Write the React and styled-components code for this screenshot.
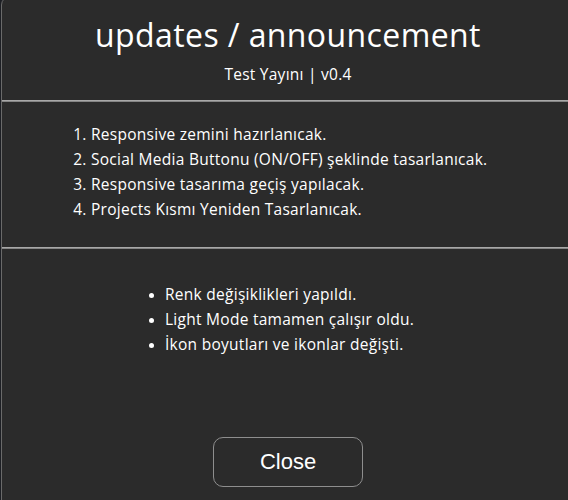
import React from "react";
import styled, { createGlobalStyle } from "styled-components";

const GlobalStyle = createGlobalStyle`
  html, body {
    margin: 0;
    padding: 0;
    background: #1d1f24;
    overflow: hidden;
  }
  body {
    font-family: "Open Sans", "DejaVu Sans", sans-serif;
  }
`;

const Dialog = styled.div`
  box-sizing: border-box;
  width: 574px;
  min-height: 520px;
  margin: -4px 0 0 1px;
  background: #2b2b2b;
  border: 1px solid #6a6a6a;
  border-radius: 9px;
  color: #ffffff;
  display: flex;
  flex-direction: column;
`;

const Header = styled.header`
  padding: 18px 0 16px;
  text-align: center;
`;

const Title = styled.h1`
  margin: 0;
  font-size: 32px;
  line-height: 40px;
  font-weight: 400;
  letter-spacing: 0.4px;
`;

const Subtitle = styled.p`
  margin: 9px 0 0;
  font-size: 15.5px;
  line-height: 20px;
  font-weight: 500;
  letter-spacing: 0.25px;
`;

const Divider = styled.hr`
  margin: 0;
  height: 0;
  border: none;
  border-top: 1px solid #a8a8a8;
  border-bottom: 1px solid #858585;
`;

const Section = styled.section`
  padding: ${(p) => p.$pad};
`;

const List = styled.ol`
  margin: 0;
  padding-left: ${(p) => p.$indent}px;
  list-style: ${(p) => (p.$bullet ? "disc" : "decimal")};
  font-size: 15.5px;
  line-height: 25px;
  font-weight: 500;
  letter-spacing: 0.27px;

  li::marker {
    font-size: ${(p) => (p.$bullet ? "13px" : "15.5px")};
  }
`;

const Footer = styled.footer`
  display: flex;
  justify-content: center;
  padding-top: 80px;
`;

const CloseButton = styled.button`
  width: 150px;
  height: 50px;
  background: transparent;
  border: 1px solid #8e8e8e;
  border-radius: 10px;
  color: #ffffff;
  font-family: "Liberation Sans", Arial, sans-serif;
  font-size: 22px;
  cursor: pointer;
`;

const plans = [
  "Responsive zemini hazırlanıcak.",
  "Social Media Buttonu (ON/OFF) şeklinde tasarlanıcak.",
  "Responsive tasarıma geçiş yapılacak.",
  "Projects Kısmı Yeniden Tasarlanıcak.",
];

const changes = [
  "Renk değişiklikleri yapıldı.",
  "Light Mode tamamen çalışır oldu.",
  "İkon boyutları ve ikonlar değişti.",
];

export default function App() {
  return (
    <>
      <GlobalStyle />
      <Dialog>
        <Header>
          <Title>updates / announcement</Title>
          <Subtitle>Test Yayını | v0.4</Subtitle>
        </Header>
        <Divider />
        <Section $pad="20px 0 25px">
          <List $indent={89}>
            {plans.map((t) => (
              <li key={t}>{t}</li>
            ))}
          </List>
        </Section>
        <Divider />
        <Section $pad="33px 0 0">
          <List as="ul" $bullet $indent={163}>
            {changes.map((t) => (
              <li key={t}>{t}</li>
            ))}
          </List>
        </Section>
        <Footer>
          <CloseButton>Close</CloseButton>
        </Footer>
      </Dialog>
    </>
  );
}
